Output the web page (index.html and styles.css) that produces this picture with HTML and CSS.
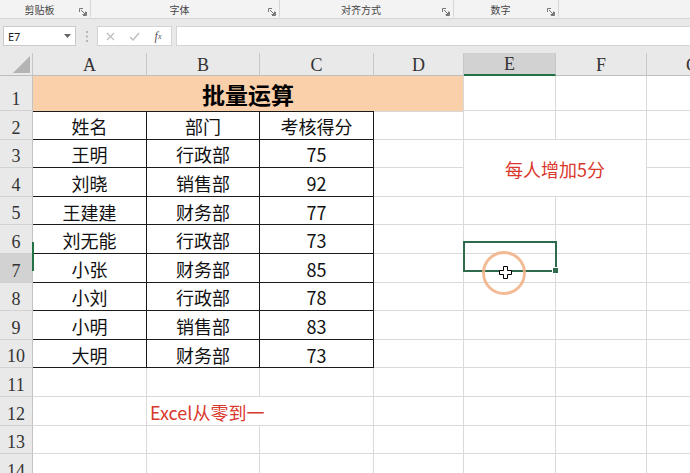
FILE: index.html
```html
<!DOCTYPE html>
<html lang="zh-CN">
<head>
    <meta charset="UTF-8">
    <title>批量运算</title>
    <link rel="stylesheet" href="styles.css">
</head>
<body>
    <!-- 功能区分组标签 -->
    <div class="ribbon">
        <div class="grp g1"><span class="lbl">剪贴板</span><svg class="launch" width="8" height="8" viewBox="0 0 8 8"><path d="M0.5 4V0.5H4M7.5 4v3.5H4M2 2l4.5 4.5M6.5 3.5v3h-3" fill="none" stroke="#777" stroke-width="1"/></svg></div>
        <div class="grp g2"><span class="lbl">字体</span><svg class="launch" width="8" height="8" viewBox="0 0 8 8"><path d="M0.5 4V0.5H4M7.5 4v3.5H4M2 2l4.5 4.5M6.5 3.5v3h-3" fill="none" stroke="#777" stroke-width="1"/></svg></div>
        <div class="grp g3"><span class="lbl">对齐方式</span><svg class="launch" width="8" height="8" viewBox="0 0 8 8"><path d="M0.5 4V0.5H4M7.5 4v3.5H4M2 2l4.5 4.5M6.5 3.5v3h-3" fill="none" stroke="#777" stroke-width="1"/></svg></div>
        <div class="grp g4"><span class="lbl">数字</span><svg class="launch" width="8" height="8" viewBox="0 0 8 8"><path d="M0.5 4V0.5H4M7.5 4v3.5H4M2 2l4.5 4.5M6.5 3.5v3h-3" fill="none" stroke="#777" stroke-width="1"/></svg></div>
    </div>

    <!-- 编辑栏 -->
    <div class="fbar">
        <div class="namebox"><span>E7</span><svg width="7" height="4" viewBox="0 0 7 4"><path d="M0 0h7L3.5 4z" fill="#666"/></svg></div>
        <div class="dots"><svg width="2" height="11" viewBox="0 0 2 11"><rect y="0" width="2" height="2" fill="#b5b5b5"/><rect y="4.5" width="2" height="2" fill="#b5b5b5"/><rect y="9" width="2" height="2" fill="#b5b5b5"/></svg></div>
        <div class="fxbox">
            <span class="fb"><svg width="9" height="9" viewBox="0 0 9 9"><path d="M1 1l7 7M8 1L1 8" stroke="#bdbdbd" stroke-width="1.2"/></svg></span>
            <span class="fb"><svg width="11" height="9" viewBox="0 0 11 9"><path d="M1 5l3 3 6-7" fill="none" stroke="#bdbdbd" stroke-width="1.3"/></svg></span>
            <span class="fb fx"><i>f</i><sub>x</sub></span>
        </div>
        <div class="finput"></div>
    </div>

    <!-- 工作表 -->
    <div class="sheet">
        <div class="corner"><svg width="17" height="17" viewBox="0 0 17 17"><path d="M17 0V17H0z" fill="#b4b4b4"/></svg></div>
        <div class="hd">A</div><div class="hd">B</div><div class="hd">C</div><div class="hd">D</div>
        <div class="hd on">E</div><div class="hd">F</div><div class="hd">G</div>

        <div class="rh">1</div>
        <div class="c title">批量运算</div>
        <div class="c"></div><div class="c"></div><div class="c"></div>

        <div class="rh">2</div>
        <div class="c t top">姓名</div><div class="c t top">部门</div><div class="c t top">考核得分</div>
        <div class="c top"></div><div class="c"></div><div class="c"></div><div class="c"></div>

        <div class="rh">3</div>
        <div class="c t">王明</div><div class="c t">行政部</div><div class="c t">75</div>
        <div class="c"></div><div class="c note">每人增加5分</div><div class="c"></div>

        <div class="rh">4</div>
        <div class="c t">刘晓</div><div class="c t">销售部</div><div class="c t">92</div>
        <div class="c"></div><div class="c"></div>

        <div class="rh">5</div>
        <div class="c t">王建建</div><div class="c t">财务部</div><div class="c t">77</div>
        <div class="c"></div><div class="c"></div><div class="c"></div><div class="c"></div>

        <div class="rh">6</div>
        <div class="c t">刘无能</div><div class="c t">行政部</div><div class="c t">73</div>
        <div class="c"></div><div class="c"></div><div class="c"></div><div class="c"></div>

        <div class="rh on">7</div>
        <div class="c t">小张</div><div class="c t">财务部</div><div class="c t">85</div>
        <div class="c"></div><div class="c"></div><div class="c"></div><div class="c"></div>

        <div class="rh">8</div>
        <div class="c t">小刘</div><div class="c t">行政部</div><div class="c t">78</div>
        <div class="c"></div><div class="c"></div><div class="c"></div><div class="c"></div>

        <div class="rh">9</div>
        <div class="c t">小明</div><div class="c t">销售部</div><div class="c t">83</div>
        <div class="c"></div><div class="c"></div><div class="c"></div><div class="c"></div>

        <div class="rh">10</div>
        <div class="c t">大明</div><div class="c t">财务部</div><div class="c t">73</div>
        <div class="c"></div><div class="c"></div><div class="c"></div><div class="c"></div>

        <div class="rh">11</div>
        <div class="c"></div><div class="c"></div><div class="c"></div>
        <div class="c"></div><div class="c"></div><div class="c"></div><div class="c"></div>

        <div class="rh">12</div>
        <div class="c"></div><div class="c spill">Excel从零到一</div><div class="c"></div>
        <div class="c"></div><div class="c"></div><div class="c"></div><div class="c"></div>

        <div class="rh">13</div>
        <div class="c"></div><div class="c"></div><div class="c"></div>
        <div class="c"></div><div class="c"></div><div class="c"></div><div class="c"></div>

        <div class="rh">14</div>
        <div class="c"></div><div class="c"></div><div class="c"></div>
        <div class="c"></div><div class="c"></div><div class="c"></div><div class="c"></div>

        <!-- 选中框、行标记和鼠标光标 -->
        <div class="rowmark"></div>
        <div class="sel"><span class="handle"></span></div>
        <div class="ring"></div>
        <svg class="cursor" width="13" height="13" viewBox="0 0 13 13"><path d="M4.5 0.5h4v4h4v4h-4v4h-4v-4h-4v-4h4z" fill="#fff" stroke="#000" stroke-width="1"/></svg>
    </div>
</body>
</html>
```

FILE: styles.css
```css
body{margin: 0; width: 690px; height: 473px; overflow: hidden; background: #fff;
 font-family: "Noto Sans CJK SC", "Noto Sans", sans-serif;}

.ribbon{display: flex; height: 18px; background: #f3f3f3; border-bottom: 1px solid #d4d4d4;
 font-size: 10px; color: #444;}
.grp{display: flex; align-items: center; box-sizing: border-box; border-right: 1px solid #d6d6d6;
 padding-right: 3px; height: 17px; padding-top: 3px;}
.grp .lbl{flex: 1; text-align: center; line-height: 14px;}
.grp .launch{margin-top: 4px;}
.g1{width: 91px;}
.g2{width: 189px;}
.g3{width: 174px;}
.g4{width: 105px;}

.fbar{display: flex; align-items: center; height: 34px; background: #e9e9e9; padding-left: 3px;}
.namebox{box-sizing: border-box; width: 73px; height: 20px; background: #fff; border: 1px solid #c9c9c9;
 display: flex; align-items: center; justify-content: space-between; padding: 0 4px 0 4px;
 font-family: "Noto Sans", sans-serif; font-size: 11px; color: #222;}
.dots{width: 21px; display: flex; justify-content: center;}
.fxbox{box-sizing: border-box; width: 75px; height: 20px; background: #fff; border: 1px solid #d4d4d4;
 display: flex; align-items: center;}
.fb{width: 24px; display: flex; justify-content: center; align-items: center;}
.fxbox .fx{font-family: "Liberation Serif", serif; font-size: 12px; color: #555;}
.fx sub{font-size: 8px; font-style: italic; vertical-align: -1px;}
.finput{flex: 1; height: 20px; box-sizing: border-box; margin-left: 4px; background: #fff;
 border: 1px solid #d4d4d4; border-right: none;}

.sheet{position: relative; display: grid;
 grid-template-columns: 33px 114px 113px 114px 90px 92px 91px 92px;
 grid-template-rows: 23px 35px repeat(13, 28.6px);}
.corner{background: #e9e9e9; border-right: 1px solid #c6c6c6; border-bottom: 1px solid #bdbdbd;
 display: flex; align-items: flex-end; justify-content: flex-end; padding: 0 2px 2px 0;}
.hd{background: #e9e9e9; border-right: 1px solid #c8c8c8; border-bottom: 1px solid #bdbdbd;
 display: flex; justify-content: center; align-items: flex-end;
 font-family: "Liberation Serif", serif; font-size: 18px; line-height: 20px; color: #333;}
.hd.on{background: #d2d2d2; border-bottom: 2px solid #217346;}
.rh{background: #e9e9e9; border-right: 1px solid #c3c3c3; border-bottom: 1px solid #d2d2d2;
 display: flex; justify-content: center; align-items: flex-end; padding-bottom: 1px;
 font-family: "Liberation Serif", serif; font-size: 18px; line-height: 20px; color: #333;}
.rh.on{background: #d2d2d2;}

.c{box-sizing: border-box; border-right: 1px solid #dadada; border-bottom: 1px solid #dadada;
 display: flex; align-items: center; justify-content: center; padding-top: 2px;
 font-size: 18px; line-height: 22px; color: #111; white-space: nowrap; min-width: 0;}
.c.t{border-right-color: #1a1a1a; border-bottom-color: #1a1a1a;}
.c.top{border-top: 1px solid #dadada;}
.c.t.top{border-top-color: #1a1a1a;}
.title{grid-column: span 4; background: #fad0ab; border-bottom: none; padding-top: 0;
 font-size: 23px; font-weight: bold; color: #000;}
.note{grid-column: span 2; grid-row: span 2; color: #d9382c;}
.spill{justify-content: flex-start; padding-left: 3px; overflow: visible; color: #d9382c;
 border-right: none;}

.rowmark{position: absolute; left: 32px; top: 189px; width: 2px; height: 29px; background: #217346;}
.sel{position: absolute; left: 463px; top: 188px; width: 94px; height: 31px; box-sizing: border-box;
 border: 2px solid #2e6a4b;}
.sel .handle{position: absolute; right: -4px; bottom: -4px; width: 5px; height: 5px;
 background: #2e6a4b; border: 1px solid #fff;}
.ring{position: absolute; left: 482px; top: 198px; width: 44px; height: 44px; box-sizing: border-box;
 border: 3px solid #f2b489; border-radius: 50%; opacity: 0.9;}
.cursor{position: absolute; left: 499px; top: 213px;}
```
